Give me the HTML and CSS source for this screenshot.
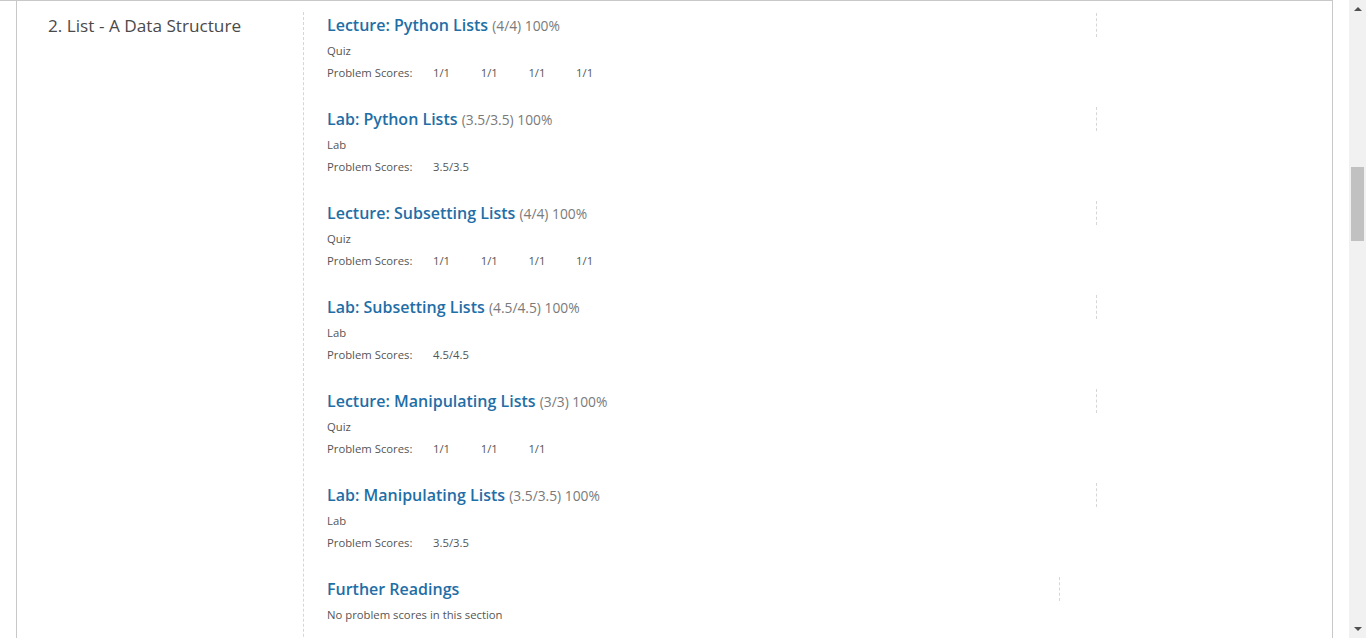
FILE: index.html
```html
<!DOCTYPE html>
<html lang="en">
<head>
<meta charset="utf-8">
<title>Progress</title>
<link rel="stylesheet" href="styles.css">
</head>
<body>
<div class="viewport">
  <main class="page">
    <div class="card">
      <section class="chapter">
        <h2 class="chapter-title">2. List - A Data Structure</h2>
        <div class="sections">
          <div class="item">
            <h3 class="item-head"><a href="#">Lecture: Python Lists</a> <span class="score">(4/4) 100%</span></h3>
            <p class="format">Quiz</p>
            <dl class="scores"><dt>Problem Scores:</dt><dd>1/1</dd><dd>1/1</dd><dd>1/1</dd><dd>1/1</dd></dl>
          </div>
          <div class="item">
            <h3 class="item-head"><a href="#">Lab: Python Lists</a> <span class="score">(3.5/3.5) 100%</span></h3>
            <p class="format">Lab</p>
            <dl class="scores"><dt>Problem Scores:</dt><dd>3.5/3.5</dd></dl>
          </div>
          <div class="item">
            <h3 class="item-head"><a href="#">Lecture: Subsetting Lists</a> <span class="score">(4/4) 100%</span></h3>
            <p class="format">Quiz</p>
            <dl class="scores"><dt>Problem Scores:</dt><dd>1/1</dd><dd>1/1</dd><dd>1/1</dd><dd>1/1</dd></dl>
          </div>
          <div class="item">
            <h3 class="item-head"><a href="#">Lab: Subsetting Lists</a> <span class="score">(4.5/4.5) 100%</span></h3>
            <p class="format">Lab</p>
            <dl class="scores"><dt>Problem Scores:</dt><dd>4.5/4.5</dd></dl>
          </div>
          <div class="item">
            <h3 class="item-head"><a href="#">Lecture: Manipulating Lists</a> <span class="score">(3/3) 100%</span></h3>
            <p class="format">Quiz</p>
            <dl class="scores"><dt>Problem Scores:</dt><dd>1/1</dd><dd>1/1</dd><dd>1/1</dd></dl>
          </div>
          <div class="item">
            <h3 class="item-head"><a href="#">Lab: Manipulating Lists</a> <span class="score">(3.5/3.5) 100%</span></h3>
            <p class="format">Lab</p>
            <dl class="scores"><dt>Problem Scores:</dt><dd>3.5/3.5</dd></dl>
          </div>
          <div class="item">
            <h3 class="item-head item-head-short"><a href="#">Further Readings</a></h3>
            <p class="format">No problem scores in this section</p>
          </div>
        </div>
      </section>
    </div>
  </main>
  <div class="scrollbar">
    <div class="arrow arrow-up"></div>
    <div class="track"><div class="thumb"></div></div>
    <div class="arrow arrow-down"></div>
  </div>
</div>
</body>
</html>
```

FILE: styles.css
```css
* { box-sizing: border-box; }
html, body { margin: 0; padding: 0; }
body {
  font-family: "Open Sans", "Liberation Sans", sans-serif;
  background: #fff;
  color: #555;
}
.viewport {
  display: flex;
  height: 638px;
  overflow: hidden;
}
.page {
  width: 1333px;
  border-top: 1px solid #c8c8c8;
  height: 638px;
}
.card {
  margin-left: 16px;
  width: 1317px;
  height: 100%;
  border-left: 1px solid #c8c8c8;
  border-right: 1px solid #c8c8c8;
}
.chapter {
  display: flex;
  padding-left: 31px;
}
.chapter-title {
  width: 255px;
  flex: none;
  margin: 13px 0 0;
  font-size: 17.2px;
  font-weight: 400;
  line-height: 24px;
  color: #4a4a4a;
}
.sections {
  margin-top: 11px;
  padding-top: 1px;
  border-left: 1px dashed #d6d6d6;
  padding-left: 23px;
  flex: 1;
  height: 700px;
}
.item {
  padding-bottom: 26px;
}
.item-head {
  margin: 0;
  width: 770px;
  height: 24px;
  border-right: 1px dashed #d6d6d6;
  font-size: 16px;
  font-weight: 600;
  line-height: 24px;
}
.item-head-short { width: 733px; }
.item-head a {
  color: #1f6ea6;
  text-decoration: none;
}
.score {
  font-size: 13.8px;
  font-weight: 400;
  line-height: 16px;
  color: #7a7a7a;
}
.format {
  margin: 6px 0 0;
  font-size: 11.3px;
  line-height: 16px;
  color: #555;
  font-weight: 400;
}
.scores {
  display: flex;
  margin: 6px 0 0;
  font-size: 11.3px;
  line-height: 16px;
  color: #555;
}
.scores dt {
  width: 106px;
  flex: none;
}
.scores dd {
  margin: 0;
  width: 47.7px;
  color: #555;
}
.scrollbar {
  width: 17px;
  margin-left: 16px;
  background: #f1f1f1;
  display: flex;
  flex-direction: column;
  align-items: center;
}
.arrow {
  width: 0;
  height: 0;
  border-left: 4px solid transparent;
  border-right: 4px solid transparent;
}
.arrow-up {
  margin-top: 7px;
  border-bottom: 4px solid #505050;
}
.arrow-down {
  margin-bottom: 7px;
  border-top: 4px solid #505050;
}
.track {
  flex: 1;
  width: 100%;
  padding-top: 156px;
  display: flex;
  justify-content: center;
}
.thumb {
  width: 13px;
  height: 74px;
  background: #c1c1c1;
}
```
